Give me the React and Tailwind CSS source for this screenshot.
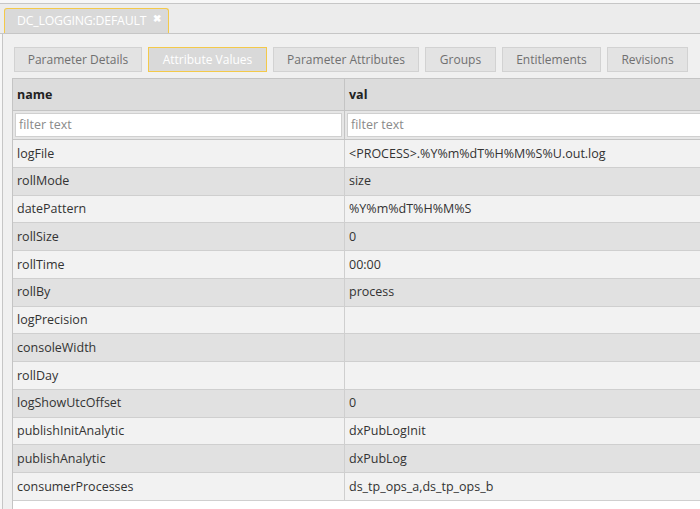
import React from "react";

const rows = [
  ["logFile", "<PROCESS>.%Y%m%dT%H%M%S%U.out.log"],
  ["rollMode", "size"],
  ["datePattern", "%Y%m%dT%H%M%S"],
  ["rollSize", "0"],
  ["rollTime", "00:00"],
  ["rollBy", "process"],
  ["logPrecision", ""],
  ["consoleWidth", ""],
  ["rollDay", ""],
  ["logShowUtcOffset", "0"],
  ["publishInitAnalytic", "dxPubLogInit"],
  ["publishAnalytic", "dxPubLog"],
  ["consumerProcesses", "ds_tp_ops_a,ds_tp_ops_b"],
];

const tabs = [
  ["Parameter Details", "w-[128px]", false],
  ["Attribute Values", "w-[119px]", true],
  ["Parameter Attributes", "w-[146px]", false],
  ["Groups", "w-[71px]", false],
  ["Entitlements", "w-[99px]", false],
  ["Revisions", "w-[81px]", false],
];

export default function App() {
  return (
    <div
      className="w-[700px] h-[509px] overflow-hidden bg-[#f7f7f7] text-[12.5px]"
      style={{ fontFamily: '"Open Sans", "Noto Sans", sans-serif' }}
    >
      <div className="h-[3px] bg-[#f7f7f7]" />
      <div className="h-[31px] border-t border-b border-[#c6c6c6] bg-[#ececec] flex items-end pl-[4px]">
        <div className="h-[25px] w-[165px] rounded-t-[3px] border border-[#f3c94a] border-b-0 bg-[#d9d9d9] flex items-center pl-[12px] pr-[7px] text-white text-[12.3px] tracking-[-0.2px]">
          <span>DC_LOGGING:DEFAULT</span>
          <span className="ml-auto text-[10px] font-bold leading-none -mt-[7px]">✖</span>
        </div>
      </div>
      <div className="ml-[2px] border-l border-[#c6c6c6] bg-[#f0f0f0] h-[475px] flex flex-col">
        <div className="flex gap-[6px] pl-[11px] pt-[13px] h-[44px]">
          {tabs.map(([label, w, active]) => (
            <div
              key={label}
              className={
                "h-[25px] flex items-center justify-center border text-[12px] " +
                w +
                (active
                  ? " border-[#f3c94a] bg-[#d9d9d9] text-white"
                  : " border-[#d2d2d2] bg-[#e3e3e3] text-[#707070]")
              }
            >
              {label}
            </div>
          ))}
        </div>
        <div className="ml-[9px] w-[700px] border-l border-t border-[#c4c4c4] bg-white flex-1 flex flex-col">
          <div className="grid grid-cols-[332px_1fr] h-[32px] bg-[#dcdcdc] border-b border-[#c4c4c4] font-bold text-[#222]">
            <div className="flex items-center pl-[4px] pt-[2px] border-r border-[#c4c4c4]">name</div>
            <div className="flex items-center pl-[4px] pt-[2px]">val</div>
          </div>
          <div className="grid grid-cols-[332px_1fr] h-[29px] bg-[#e6e6e6] border-b border-[#c4c4c4]">
            <div className="flex items-center p-[2px] pr-[2px] border-r border-[#c4c4c4]">
              <div className="w-full h-[24px] bg-white border border-[#d0d0d0] flex items-center pl-[3px] text-[#8a8a8a]">filter text</div>
            </div>
            <div className="flex items-center p-[2px]">
              <div className="w-full h-[24px] bg-white border border-[#d0d0d0] flex items-center pl-[3px] text-[#8a8a8a]">filter text</div>
            </div>
          </div>
          {rows.map(([n, v], i) => (
            <div
              key={n}
              className={
                "grid grid-cols-[332px_1fr] h-[27.75px] border-b border-[#cfcfcf] text-[#333] " +
                (i % 2 === 0 ? "bg-[#f2f2f2]" : "bg-[#e1e1e1]")
              }
            >
              <div className="flex items-center pl-[4px] pt-[1px] border-r border-[#cfcfcf]">{n}</div>
              <div className="flex items-center pl-[4px] pt-[1px]">{v}</div>
            </div>
          ))}
        </div>
      </div>
    </div>
  );
}
